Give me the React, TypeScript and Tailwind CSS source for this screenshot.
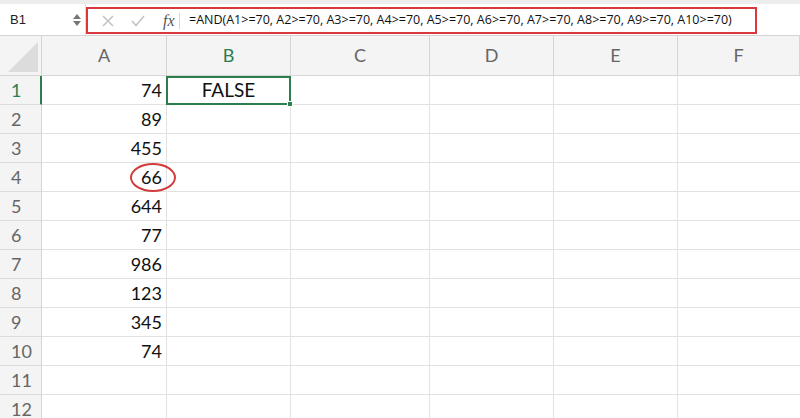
import React from 'react';

const cols = ['A', 'B', 'C', 'D', 'E', 'F'];
const values = ['74', '89', '455', '66', '644', '77', '986', '123', '345', '74', '', ''];

export default function App() {
  return (
    <div className="w-[800px] h-[418px] overflow-hidden bg-white font-['Lato',sans-serif] text-[#111]">
      {/* formula bar */}
      <div className="h-[36px] bg-[#ededed] pt-[4px] border-b border-[#d4d4d4]">
        <div className="flex h-[31px] bg-white items-stretch">
          <div className="w-[86px] flex items-center justify-between pl-[10px] pr-[4px] border-r border-[#dcdcdc]">
            <span className="text-[13px] font-['Liberation_Sans',sans-serif] text-[#222]">B1</span>
            <div className="flex flex-col gap-[2px] items-center">
              <svg width="8" height="5" viewBox="0 0 8 5"><path d="M4 0 L8 5 L0 5 Z" fill="#777" /></svg>
              <svg width="8" height="5" viewBox="0 0 8 5"><path d="M0 0 L8 0 L4 5 Z" fill="#777" /></svg>
            </div>
          </div>
          <div className="w-[671px] mt-[3px] h-[27px] border-2 border-[#d9393d] flex items-center">
            <div className="w-[91px] flex items-center h-full">
              <svg className="ml-[14px]" width="12" height="12" viewBox="0 0 12 12">
                <path d="M1 1 L11 11 M11 1 L1 11" stroke="#c4c4c4" strokeWidth="1.6" />
              </svg>
              <svg className="ml-[17px]" width="14" height="12" viewBox="0 0 14 12">
                <path d="M1 6 L5 10.5 L13 1" stroke="#c4c4c4" strokeWidth="1.6" fill="none" />
              </svg>
              <span className="ml-[18px] italic font-['Liberation_Serif',serif] text-[16px] text-[#555] leading-none">fx</span>
            </div>
            <div className="w-px h-[16px] bg-[#d6d6d6] mr-[9px]" />
            <span className="text-[12.5px] font-['Open_Sans',sans-serif] text-[#111] whitespace-nowrap">
              =AND(A1&gt;=70, A2&gt;=70, A3&gt;=70, A4&gt;=70, A5&gt;=70, A6&gt;=70, A7&gt;=70, A8&gt;=70, A9&gt;=70, A10&gt;=70)
            </span>
          </div>
        </div>
      </div>

      {/* sheet */}
      <div className="grid grid-cols-[42px_125px_124px_139px_124px_124px_1fr] grid-rows-[40px] auto-rows-[29px]">
        <div className="bg-[#f4f4f4] border-r border-b border-[#d6d6d6] flex items-end justify-end p-[3px]">
          <svg width="30" height="30" viewBox="0 0 30 30"><path d="M30 0 L30 30 L0 30 Z" fill="#dcdcdc" /></svg>
        </div>
        {cols.map((c) => (
          <div
            key={c}
            className={`bg-[#f4f4f4] border-r border-b border-[#d6d6d6] flex items-center justify-center text-[18px] ${c === 'B' ? 'text-[#2e7d4f]' : 'text-[#666]'}`}
          >
            {c}
          </div>
        ))}
        {values.map((v, i) => (
          <React.Fragment key={i}>
            <div
              className={`bg-[#f4f4f4] border-b border-[#dcdcdc] flex items-center pl-[11px] text-[18px] ${i === 0 ? 'text-[#2e7d4f] border-r-2 border-r-[#2e7d4f]' : 'text-[#666] border-r border-r-[#d6d6d6]'}`}
            >
              {i + 1}
            </div>
            <div className="relative border-r border-b border-[#e2e2e2] flex items-center justify-end pr-[4px] text-[18px]">
              {v}
              {i === 3 && (
                <div className="absolute left-[88px] top-[0px] w-[46px] h-[29px] rounded-[50%] border-2 border-[#d33c3c]" />
              )}
            </div>
            {i === 0 ? (
              <div className="relative border-2 border-[#2e7d4f] -ml-px flex items-center justify-center text-[19px]">
                FALSE
                <div className="absolute -right-[4px] -bottom-[4px] w-[6px] h-[6px] bg-[#2e7d4f] border border-white" />
              </div>
            ) : (
              <div className="border-r border-b border-[#e2e2e2]" />
            )}
            <div className="border-r border-b border-[#e2e2e2]" />
            <div className="border-r border-b border-[#e2e2e2]" />
            <div className="border-r border-b border-[#e2e2e2]" />
            <div className="border-b border-[#e2e2e2]" />
          </React.Fragment>
        ))}
      </div>
    </div>
  );
}
